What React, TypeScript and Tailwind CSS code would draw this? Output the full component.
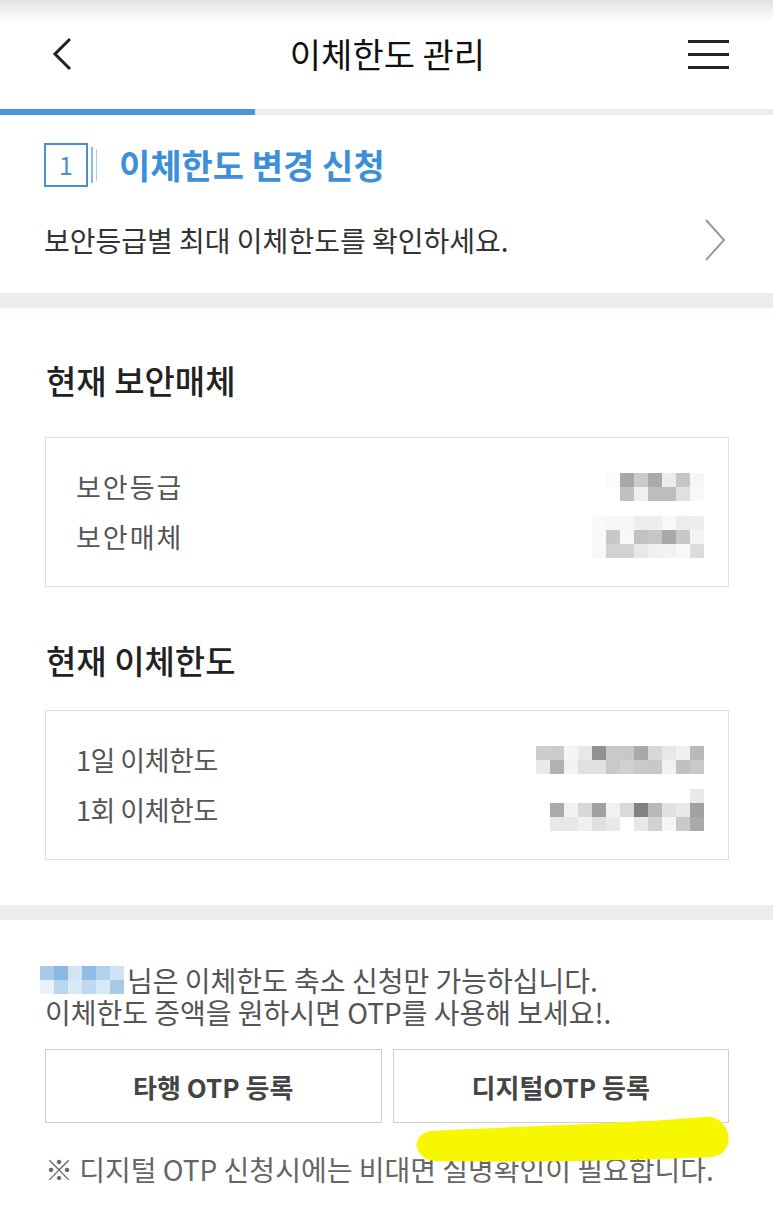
import React from "react";

const font = { fontFamily: '"Noto Sans CJK KR", "Noto Sans", sans-serif' };

type TMosaicProps = { cells: string[][]; size?: number };

// pixelated (masked) value
function Mosaic({ cells, size = 14 }: TMosaicProps) {
  return (
    <div className="flex flex-col">
      {cells.map((row, i) => (
        <div key={i} className="flex">
          {row.map((c, j) => (
            <div key={j} style={{ backgroundColor: c, width: size, height: size }} />
          ))}
        </div>
      ))}
    </div>
  );
}

const gradeCells = [
  ["#fafafa", "#a8a8a8", "#cbcbcb", "#a9a9a9", "#ececec", "#c6c6c6", "#f6f6f6"],
  ["#ffffff", "#c0c0c0", "#efefef", "#bdbdbd", "#bdbdbd", "#e0e0e0", "#f8f8f8"],
];
const mediaCells = [
  ["#f9f9f9", "#f6f6f6", "#f6f6f6", "#eeeeee", "#eeeeee", "#f8f8f8", "#ececec", "#ededed"],
  ["#f8f8f8", "#c8c8c8", "#f8f8f8", "#c2c2c2", "#c6c6c6", "#a9a9a9", "#c8c8c8", "#f4f4f4"],
  ["#f8f8f8", "#d2d2d2", "#d2d2d2", "#e8e8e8", "#f0f0f0", "#f2f2f2", "#f8f8f8", "#dcdcdc"],
];
const dayCells = [
  ["#cdcdcd", "#cbcbcb", "#f5f5f5", "#e8e8e8", "#929292", "#c9c9c9", "#c8c8c8", "#a9a9a9", "#d8d8d8", "#e8e8e8", "#f0f0f0", "#b9b9b9"],
  ["#e9e9e9", "#b1b1b1", "#f2f2f2", "#e0e0e0", "#e1e1e1", "#c9c9c9", "#d0d0d0", "#c9c9c9", "#c8c8c8", "#f1f1f1", "#c1c1c1", "#c9c9c9"],
];
const onceCells = [
  ["#ffffff", "#ffffff", "#ffffff", "#ffffff", "#ffffff", "#ffffff", "#ffffff", "#ffffff", "#ffffff", "#ffffff", "#e9e9e9"],
  ["#ababab", "#f1f1f1", "#d8d8d8", "#a1a1a1", "#f1f1f1", "#d9d9d9", "#828282", "#b9b9b9", "#e1e1e1", "#e9e9e9", "#a1a1a1"],
  ["#e8e8e8", "#e8e8e8", "#f0f0f0", "#e1e1e1", "#e9e9e9", "#ffffff", "#e8e8e8", "#d1d1d1", "#f5f5f5", "#c9c9c9", "#a9a9a9"],
];
const nameCells = [
  ["#a9c9e9", "#8bb9e1", "#d1e4f4", "#91bde5", "#b1d1ed", "#d0e3f5"],
  ["#e9f2fa", "#b9d5ef", "#d9e9f7", "#c1d9ef", "#d9e9f5", "#a9c9e9"],
];

type TRow = { label: string; cells: string[][]; wide?: boolean };

function InfoBox({ rows }: { rows: TRow[] }) {
  return (
    <div className="ml-[45px] mr-[44px] border border-[#dedede] pl-[30px] pr-[24px] py-[32px] flex flex-col gap-[16px]">
      {rows.map((r) => (
        <div key={r.label} className="flex items-center justify-between h-[34px]">
          <span className={`text-[27px] leading-[34px] text-[#555] ${r.wide ? "tracking-[2px]" : "tracking-[-0.5px]"}`}>
            {r.label}
          </span>
          <Mosaic cells={r.cells} />
        </div>
      ))}
    </div>
  );
}

export default function App() {
  return (
    <div className="relative w-[773px] min-h-[1224px] bg-white overflow-hidden" style={font}>
      {/* header */}
      <div className="h-[109px] bg-linear-to-b from-[#e2e2e2] via-white via-20% to-white grid grid-cols-[1fr_auto_1fr] items-center px-[48px]">
        <svg width="28" height="36" viewBox="0 0 28 36" className="-mt-[2px]">
          <path d="M22 3 L7 18 L22 33" fill="none" stroke="#222" strokeWidth="3" />
        </svg>
        <h1 className="text-[34px] leading-[44px] text-[#111] -mt-[2px] ml-[2px]">이체한도 관리</h1>
        <div className="flex justify-end">
          <svg width="42" height="32" viewBox="0 0 42 32" className="-mr-[5px]">
            <rect x="0" y="1" width="41" height="3" fill="#222" />
            <rect x="0" y="14" width="41" height="3" fill="#222" />
            <rect x="0" y="27" width="41" height="3" fill="#222" />
          </svg>
        </div>
      </div>
      <div className="h-[6px] bg-[#ececec]">
        <div className="h-full w-[255px] bg-[#4a96d8]" />
      </div>

      {/* step 1 */}
      <div className="pl-[44px] pr-[46px] pt-[28px] pb-[36px]">
        <div className="flex items-center h-[44px]">
          <div className="w-[44px] h-[44px] border-[2px] border-[#4a8fd4] flex items-center justify-center text-[25px] text-[#4a8fd4]">
            1
          </div>
          <div className="ml-[3px] w-[1.5px] h-[36px] bg-[#8fb9e2]" />
          <div className="ml-[3px] w-[1.5px] h-[32px] bg-[#aacbeb]" />
          <h2 className="ml-[22px] text-[34px] leading-[44px] font-bold text-[#3d8fd9]">이체한도 변경 신청</h2>
        </div>
        <div className="mt-[36px] flex items-center justify-between h-[34px]">
          <p className="text-[28px] leading-[34px] text-[#333]">보안등급별 최대 이체한도를 확인하세요.</p>
          <svg width="24" height="44" viewBox="0 0 24 44">
            <path d="M3 2 L21 22 L3 42" fill="none" stroke="#999" strokeWidth="2" />
          </svg>
        </div>
      </div>
      <div className="h-[15px] bg-[#eaecef]" />

      {/* current */}
      <div className="pt-[52px] pb-[45px]">
        <h3 className="px-[46px] text-[33px] font-medium text-[#222] leading-[40px]">현재 보안매체</h3>
        <div className="mt-[37px]">
          <InfoBox
            rows={[
              { label: "보안등급", cells: gradeCells, wide: true },
              { label: "보안매체", cells: mediaCells, wide: true },
            ]}
          />
        </div>
        <h3 className="mt-[53px] px-[46px] text-[33px] font-medium text-[#222] leading-[40px]">현재 이체한도</h3>
        <div className="mt-[30px]">
          <InfoBox
            rows={[
              { label: "1일 이체한도", cells: dayCells },
              { label: "1회 이체한도", cells: onceCells },
            ]}
          />
        </div>
      </div>
      <div className="h-[15px] bg-[#eaecef]" />

      {/* otp */}
      <div className="pl-[45px] pr-[44px] pt-[44px] pb-[40px]">
        <div className="text-[28px] leading-[32px] text-[#555]">
          <div className="flex items-center">
            <div className="-ml-[5px] mr-[3px]">
              <Mosaic cells={nameCells} />
            </div>
            <span>님은 이체한도 축소 신청만 가능하십니다.</span>
          </div>
          <p>이체한도 증액을 원하시면 OTP를 사용해 보세요!.</p>
        </div>
        <div className="mt-[21px] grid grid-cols-2 gap-[11px]">
          <button className="h-[74px] border border-[#cfcfcf] text-[26px] font-bold text-[#444]">타행 OTP 등록</button>
          <button className="h-[74px] border border-[#cfcfcf] text-[26px] font-bold text-[#444]">디지털OTP 등록</button>
        </div>
        <p className="mt-[30px] text-[28px] leading-[32px] text-[#666] whitespace-nowrap">
          ※ 디지털 OTP 신청시에는 비대면 실명확인이 필요합니다.
        </p>
      </div>

      {/* highlighter mark */}
      <svg className="absolute left-0 top-0 pointer-events-none" width="773" height="1224">
        <path
          d="M432 1131 C520 1126 640 1123 704 1117 C732 1114 738 1154 712 1157 C640 1160 520 1163 436 1161 C412 1159 410 1133 432 1131 Z"
          fill="#f7f700"
        />
      </svg>
    </div>
  );
}
